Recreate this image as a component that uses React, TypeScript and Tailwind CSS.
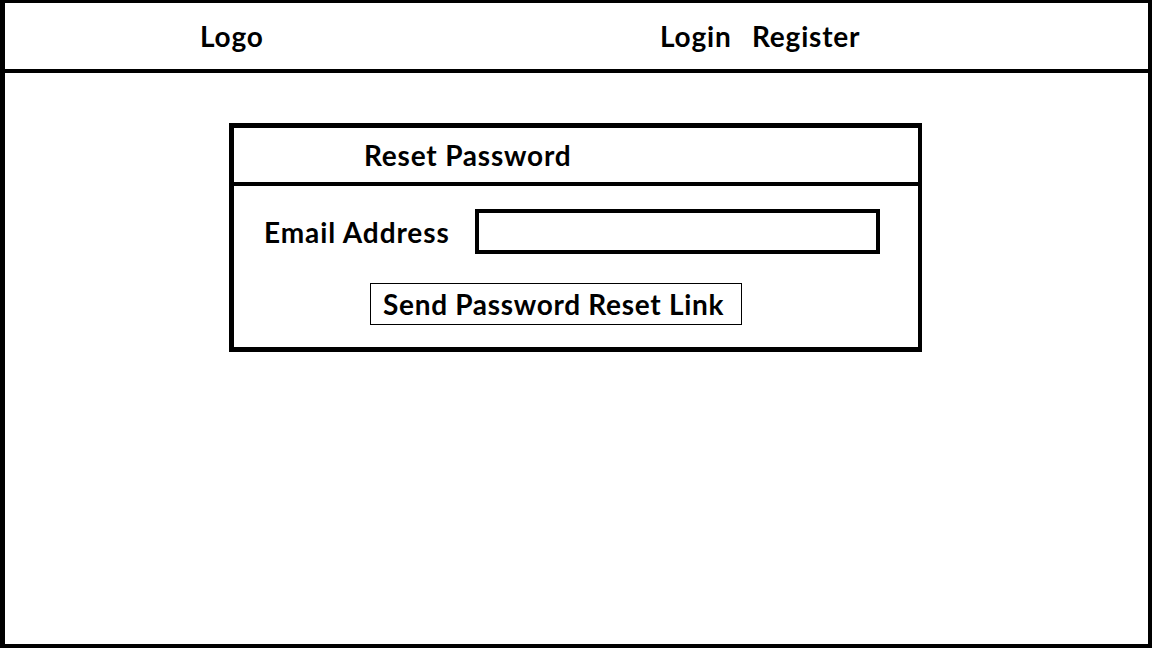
export default function App() {
  return (
    <div
      className="flex h-[648px] w-[1152px] flex-col border-4 border-l-[5px] border-t-[3px] border-black bg-white text-black"
      style={{ fontFamily: 'Lato, "Open Sans", sans-serif' }}
    >
      <header className="flex h-[70px] shrink-0 items-center border-b-4 border-black pl-[195px] text-[28px] font-bold tracking-[0.8px]">
        <span className="w-[460px]">Logo</span>
        <span className="w-[92px]">Login</span>
        <span>Register</span>
      </header>

      <main className="flex-1">
        <section className="ml-[224px] mt-[50px] h-[229px] w-[693px] border-[5px] border-r-4 border-black">
          <div className="flex h-[58px] items-center border-b-4 border-black pl-[130px] text-[28px] font-bold tracking-[0.8px]">
            Reset Password
          </div>
          <div className="flex items-center pl-[30px] pt-[23px]">
            <label className="w-[211px] text-[28px] font-bold tracking-[0.9px]">Email Address</label>
            <input className="h-[45px] w-[405px] border-4 border-black outline-none" />
          </div>
          <button className="ml-[136px] mt-[29px] flex h-[42px] w-[372px] items-center border border-black pl-[12px] text-[28px] font-bold leading-none tracking-[0.7px]">
            Send Password Reset Link
          </button>
        </section>
      </main>
    </div>
  );
}
